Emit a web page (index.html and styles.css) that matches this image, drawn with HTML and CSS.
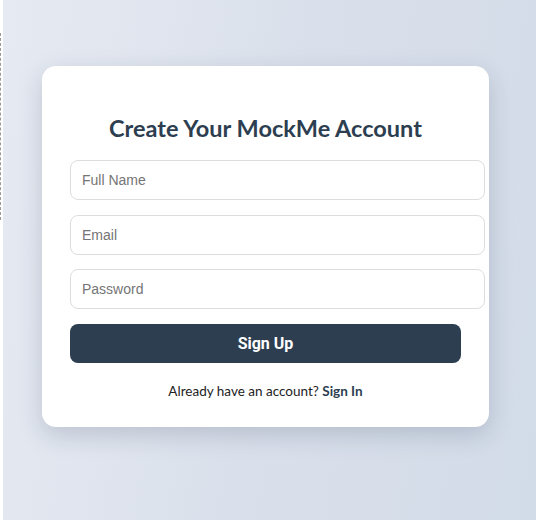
FILE: index.html
```html
<!DOCTYPE html>
<html lang="en">
<head>
    <meta charset="UTF-8">
    <meta name="viewport" content="width=device-width, initial-scale=1.0">
    <title>Sign Up - MockMe</title>
    <link rel="stylesheet" href="styles.css">
</head>
<body>
    <div class="edge"></div>

    <!-- Sign Up Card -->
    <main class="page">
        <div class="card">
            <h2>Create Your MockMe Account</h2>
            <form class="signup-form">
                <input type="text" placeholder="Full Name">
                <input type="email" placeholder="Email">
                <input type="password" placeholder="Password">
                <button type="button" class="btn">Sign Up</button>
            </form>
            <p class="switch">Already have an account? <a href="#">Sign In</a></p>
        </div>
    </main>
</body>
</html>
```

FILE: styles.css
```css
/* Reset & Global Styling */
* {
    margin: 0;
    padding: 0;
}
body {
    display: flex;
    min-height: 520px;
    font-family: Lato, "Liberation Sans", sans-serif;
    background-color: #fff;
    color: #333;
}
a {
    text-decoration: none;
    color: inherit;
}

/* Left edge strip */
.edge {
    width: 3px;
    flex-shrink: 0;
    background-color: #fff;
    border-left: 1px dashed #999;
    margin: 33px 0 300px 0;
    box-sizing: border-box;
}

/* Page */
.page {
    flex: 1;
    padding: 66px 0 0 39px;
    background: linear-gradient(100deg, #e6eaf2 0%, #dae0eb 50%, #d2dbe8 100%);
}

/* Card */
.card {
    width: 391px;
    padding: 48px 28px 28px 28px;
    background-color: #fff;
    border-radius: 14px;
    box-shadow: 0 8px 24px rgba(30, 45, 70, 0.18);
}
.card h2 {
    text-align: center;
    font-size: 23.5px;
    font-weight: 700;
    color: #2c3e50;
    margin-bottom: 18px;
}

/* Form */
.signup-form input {
    display: block;
    width: 100%;
    padding: 11px;
    margin-bottom: 14.5px;
    border: 1px solid #ddd;
    border-radius: 8px;
    font-family: "Liberation Sans", Arial, sans-serif;
    font-size: 14px;
    line-height: 16px;
    color: #333;
}
.signup-form input::placeholder {
    color: #757575;
}

/* Buttons */
.btn {
    display: block;
    width: 100%;
    height: 39px;
    background-color: #2c3e50;
    color: white;
    border: none;
    border-radius: 8px;
    font-family: Roboto, "Liberation Sans", sans-serif;
    font-size: 16px;
    font-weight: 700;
    cursor: pointer;
}
.btn:hover {
    background-color: #1f2d3a;
}

.switch {
    margin-top: 20px;
    text-align: center;
    font-size: 13.5px;
    color: #222;
}
.switch a {
    font-weight: 700;
    color: #2c3e50;
}
```
